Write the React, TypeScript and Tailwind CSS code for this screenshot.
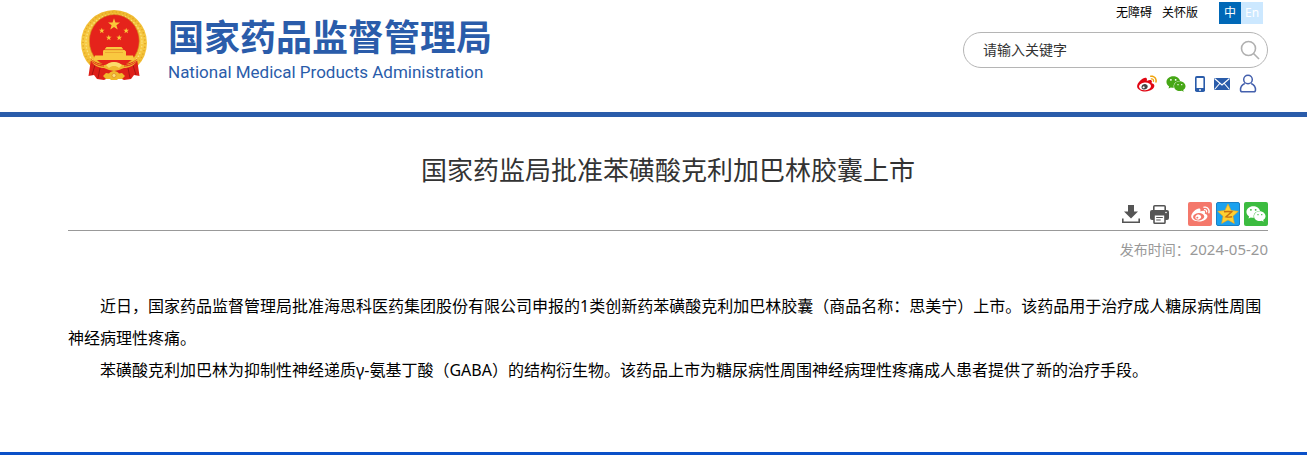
import type { ReactNode } from "react";
import { FaWeixin } from "react-icons/fa";

const PARAGRAPHS = [
  "近日，国家药品监督管理局批准海思科医药集团股份有限公司申报的1类创新药苯磺酸克利加巴林胶囊（商品名称：思美宁）上市。该药品用于治疗成人糖尿病性周围神经病理性疼痛。",
  "苯磺酸克利加巴林为抑制性神经递质γ-氨基丁酸（GABA）的结构衍生物。该药品上市为糖尿病性周围神经病理性疼痛成人患者提供了新的治疗手段。",
];

function starPoints(cx: number, cy: number, r: number, inner = 0.4) {
  return Array.from({ length: 10 }, (_, i) => {
    const radius = i % 2 ? r * inner : r;
    const angle = (Math.PI / 5) * i - Math.PI / 2;
    return `${(cx + radius * Math.cos(angle)).toFixed(2)},${(cy + radius * Math.sin(angle)).toFixed(2)}`;
  }).join(" ");
}

function Emblem() {
  return (
    <svg viewBox="0 0 66 71" className="h-[71px] w-[66px] shrink-0" aria-hidden="true">
      <defs>
        <linearGradient id="gold" x1="0" y1="0" x2="0" y2="1">
          <stop offset="0" stopColor="#efb82e" />
          <stop offset="0.5" stopColor="#f7cb45" />
          <stop offset="1" stopColor="#eeb023" />
        </linearGradient>
      </defs>
      {/* wheat ring */}
      <circle cx="33" cy="33" r="33" fill="url(#gold)" />
      <circle cx="33" cy="33" r="31" fill="none" stroke="#e2a524" strokeWidth="1.5" strokeDasharray="1.2 2.4" />
      <circle cx="33" cy="32.500" r="28" fill="none" stroke="#fbdf78" strokeWidth="1.4" strokeDasharray="1.6 1.8" />
      <ellipse cx="33.300" cy="31" rx="25" ry="26.500" fill="#e5231b" stroke="#d6921a" strokeWidth="0.7" />
      <polygon points={starPoints(33, 14.5, 6.3)} fill="#fac83a" />
      <polygon points={starPoints(20.8, 20.7, 3)} fill="#fac83a" />
      <polygon points={starPoints(27.8, 27.7, 3)} fill="#fac83a" />
      <polygon points={starPoints(38.2, 27.7, 3)} fill="#fac83a" />
      <polygon points={starPoints(45.2, 20.7, 3)} fill="#fac83a" />
      {/* gate tower */}
      <path d="M25.500 37h15l2 2.500h-19zM22.500 40h21l1.500 1.500v4H22v-4zM14 45.500h38l1.500 4.500h-41z" fill="#f9c940" />
      <path d="M24 39.800h18M24 42.500h18" stroke="#e08a20" strokeWidth="0.5" />
      {/* drapery */}
      <path d="M10 49l-2.500 17 5.500-1 3 4 7 1 4-2h12l4 2 7-1 3-4 5.500 1L56 49c-5 4-9 5-14 5H24c-5 0-9-1-14-5z" fill="#de1f19" />
      <path d="M14 55l-3 10M19 58l-2 10M52 55l3 10M47 58l2 10" stroke="#a91412" strokeWidth="1" />
      <path d="M8 47c5 6 10 8 15 8 4 0 6-3 10-3s6 3 10 3c5 0 10-2 15-8l-1 3c-4 6-9 8-14 8l-5 2-5 1-5-1-5-2c-5 0-10-2-14-8z" fill="#efb92f" />
      <path d="M10 51c5 4 9 5 13 5M56 51c-5 4-9 5-13 5" fill="none" stroke="#e5231b" strokeWidth="1" />
      <path d="M25 55c2-2 5-3 8-3s6 1 8 3l-3 3c-1.500-1.500-3-2-5-2s-3.500.5-5 2z" fill="#fcdc6a" />
      {/* gear */}
      <path d="M22 66l3-3 3 .5c1-1.500 3-2.500 5-2.500s4 1 5 2.500l3-.5 3 3-3 3h-4l-1 1h-6l-1-1h-4z" fill="#f0b92d" />
      <circle cx="33" cy="65.500" r="2" fill="#fbe07c" stroke="#d8801b" strokeWidth="0.6" />
    </svg>
  );
}

function WeiboMark({ body, pupil, wave, eye = "none", className }: { body: string; pupil: string; wave: string; eye?: string; className: string }) {
  return (
    <svg viewBox="0 20 512 440" className={className} aria-hidden="true">
      <ellipse cx="205" cy="308" rx="158" ry="105" fill={eye} />
      <path fill={wave} d="M407 177.6c7.6-24-13.4-46.8-37.4-41.7-22 4.8-28.8-28.1-7.1-32.8 50.1-10.9 92.3 37.1 76.5 84.8-6.8 21.2-38.8 10.8-32-10.3zM347.9 35.1c-25.9 5.6-16.8 43.7 8.3 38.3 72.3-15.2 134.8 52.8 111.7 124-7.4 24.2 29.1 37 37.4 12 31.9-99.8-55.1-195.9-157.4-174.3z" />
      <path fill={body} d="M214.8 446.7C108.5 446.7 0 395.3 0 310.4c0-44.3 28-95.4 76.3-143.7C176 67 279.5 65.8 249.9 161c-4 13.1 12.3 5.7 12.3 6 79.5-33.6 140.5-16.8 114 51.4-3.7 9.4 1.1 10.9 8.3 13.1 135.7 42.3 34.8 215.2-169.7 215.2zm143.7-146.3c-5.4-55.7-78.5-94-163.4-85.7-84.8 8.6-148.8 60.3-143.4 116s78.5 94 163.4 85.7c84.8-8.6 148.8-60.3 143.4-116z" />
      <path fill={pupil} d="M269.4 346.1c-17.1 38.8-66.8 60-109.1 46.3-40.8-13.1-58-53.4-40.3-89.7 17.7-35.4 63.1-55.4 103.4-45.1 42 10.8 63.1 50.2 46 88.5zm-86.3-30c-12.900-5.400-30 .3-38 12.900-8.300 12.900-4.300 28 8.600 34 13.100 6 30.800.3 39.100-12.900 8-13.100 3.700-28.300-9.700-34z" />
    </svg>
  );
}

function IconLink({ label, className, children }: { label: string; className?: string; children: ReactNode }) {
  return (
    <a href="#" aria-label={label} title={label} className={className}>
      {children}
    </a>
  );
}

function Header() {
  return (
    <header className="border-b-[5px] border-[#2a5caa]">
      <div className="flex h-28 justify-between pr-[39px] pl-[81px]">
        <a href="#" className="flex items-start gap-[21px] pt-[10px] text-[#2a5caa]">
          <Emblem />
          <div className="pt-2">
            <div className="text-[36px] leading-10 font-bold">国家药品监督管理局</div>
            <div className="pt-1 font-['Roboto','Liberation_Sans',sans-serif] text-[17px] leading-5">
              National Medical Products Administration
            </div>
          </div>
        </a>

        <div className="flex w-[305px] flex-col pt-[2px]">
          <nav className="flex h-[22px] items-center justify-end pr-[5px] text-xs">
            <a href="#" className="mr-[10px]">无障碍</a>
            <a href="#" className="mr-[21px]">关怀版</a>
            <a href="#" className="w-[22px] bg-[#0068b7] text-center leading-[22px] text-white">中</a>
            <a href="#" className="w-[22px] bg-[#cce8ff] text-center leading-[22px] text-white">En</a>
          </nav>

          <form className="mt-2 flex h-9 items-center rounded-full border border-[#b5b5b5] pr-[7px] pl-[19px]">
            <input
              type="text"
              aria-label="搜索"
              placeholder="请输入关键字"
              className="min-w-0 flex-1 text-sm outline-none placeholder:text-[#333333]"
            />
            <button type="button" aria-label="搜索">
              <svg viewBox="0 0 20 20" className="size-5" fill="none" stroke="#b0b0b0" strokeWidth="1.6">
                <circle cx="8.500" cy="8.500" r="7" />
                <path d="M13.500 13.500l5.500 5.500" />
              </svg>
            </button>
          </form>

          <div className="mt-[6px] flex h-[19px] items-center justify-end gap-[9px] pr-[11px]">
            <IconLink label="微博">
              <WeiboMark className="h-[17px] w-5" body="#e10613" pupil="#444444" wave="#f0a30c" eye="#ffffff" />
            </IconLink>
            <IconLink label="微信">
              <FaWeixin className="size-5 text-[#46a716]" />
            </IconLink>
            <IconLink label="移动端">
              <svg viewBox="0 0 10 16" className="h-4 w-[10px]">
                <rect width="10" height="16" rx="1.800" fill="#2a5caa" />
                <rect x="1.600" y="2" width="6.800" height="10" fill="#fff" />
                <circle cx="5" cy="14" r="0.900" fill="#fff" />
              </svg>
            </IconLink>
            <IconLink label="邮箱">
              <svg viewBox="0 0 16 12" className="h-3 w-4">
                <rect width="16" height="12" fill="#2a5caa" />
                <path d="M0.500 0.500L8 7l7.500-6.500M0.500 11.500L5.700 5.500M15.500 11.500L10.300 5.500" fill="none" stroke="#fff" strokeWidth="1.100" />
              </svg>
            </IconLink>
            <IconLink label="登录">
              <svg viewBox="0 0 18 19" className="h-[19px] w-[18px]" fill="none" stroke="#4460ad" strokeWidth="1.500">
                <circle cx="9" cy="5.500" r="4.300" />
                <path d="M5.800 9.500C3 10.600 1.500 13 1.500 16c0 1 .6 1.800 1.700 1.800h11.600c1.100 0 1.700-.8 1.700-1.800 0-3-1.500-5.400-4.300-6.500" />
              </svg>
            </IconLink>
          </div>
        </div>
      </div>
    </header>
  );
}

function Toolbar() {
  return (
    <div className="flex h-6 items-center justify-end">
      <button type="button" aria-label="下载" className="mr-[10px]">
        <svg viewBox="0 0 18 18" className="size-[18px]" fill="#555555">
          <path d="M6 0h6v6.500h4L9 13.500 2 6.500h4z" />
          <path d="M0.800 13.500v3.700h16.400v-3.700" fill="none" stroke="#555555" strokeWidth="1.600" />
        </svg>
      </button>
      <button type="button" aria-label="打印" className="mr-[19px]">
        <svg viewBox="0 0 19 19" className="size-[19px]">
          <path d="M3.800 5V1.800c0-.6.4-1 1-1h9.400c.6 0 1 .4 1 1V5" fill="none" stroke="#555555" strokeWidth="1.600" />
          <rect y="5" width="19" height="10" rx="2" fill="#555555" />
          <rect x="4" y="9.800" width="11" height="8.400" rx="0.800" fill="#fff" stroke="#555555" strokeWidth="1.600" />
          <path d="M6.200 12.500h6.600M6.200 15h4.500" stroke="#555555" strokeWidth="1.200" />
          <circle cx="16" cy="7.500" r="0.800" fill="#fff" />
        </svg>
      </button>
      <div className="flex gap-1">
        <IconLink label="分享到微博" className="flex size-6 items-center justify-center rounded-xs bg-[#f4786b]">
          <WeiboMark className="h-4 w-[19px]" body="#ffffff" pupil="#ffffff" wave="#ffffff" />
        </IconLink>
        <IconLink label="分享到QQ空间" className="flex size-6 items-center justify-center rounded-xs border border-[#1a7fc4] bg-[#1ba1ee]">
          <svg viewBox="0 0 22 22" className="size-[22px]">
            <polygon points={starPoints(11, 11.7, 10.8, 0.48)} fill="#ffd033" stroke="#f3a614" strokeWidth="0.6" strokeLinejoin="round" />
            <path d="M7 8.800c2.800-.5 5.300-.5 7.700 0L9 13.800c2 .4 4 .4 6 0" fill="none" stroke="#c9700f" strokeWidth="1.400" />
          </svg>
        </IconLink>
        <IconLink label="分享到微信" className="flex size-6 items-center justify-center rounded-xs bg-[#3cbc40]">
          <FaWeixin className="size-5 text-white" />
        </IconLink>
      </div>
    </div>
  );
}

export default function App() {
  return (
    <div className="bg-white font-['Noto_Sans','Noto_Sans_CJK_SC',sans-serif] text-black" lang="zh-CN">
      <Header />
      <main className="border-b-[3px] border-[#0a50c8] pt-[35px] pr-[39px] pb-[66px] pl-[68px]">
        <h1 className="text-center text-[26px] leading-9 text-[#333333]">国家药监局批准苯磺酸克利加巴林胶囊上市</h1>
        <div className="mt-[14px] border-b border-[#999999] pb-1">
          <Toolbar />
        </div>
        <p className="mt-[6px] text-right text-sm leading-6 text-[#999999]">
          发布时间：<time dateTime="2024-05-20" className="text-[15px]">2024-05-20</time>
        </p>
        <article className="mt-7 text-base leading-8">
          {PARAGRAPHS.map((text) => (
            <p key={text} className="indent-8">{text}</p>
          ))}
        </article>
      </main>
    </div>
  );
}
